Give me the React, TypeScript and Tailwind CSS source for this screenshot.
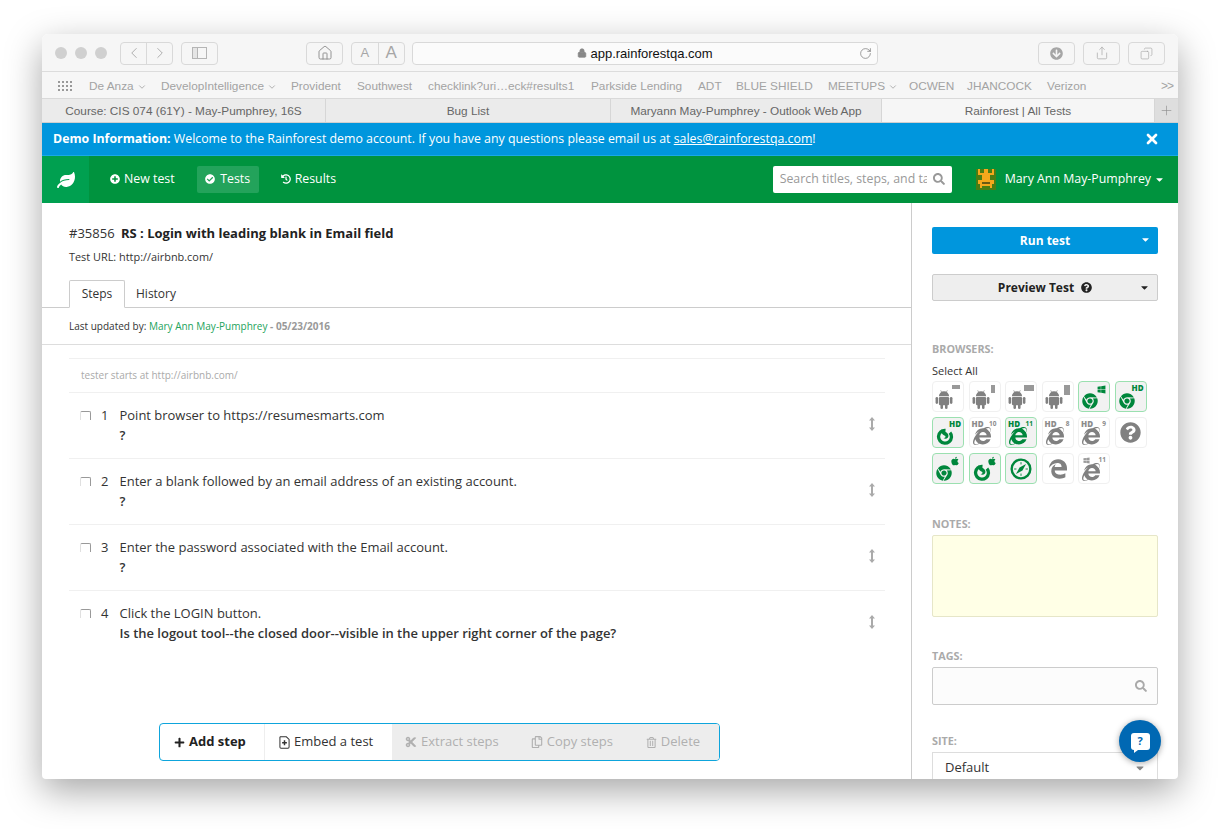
import { ChevronDown, ChevronLeft, ChevronRight, RotateCw, Plus, X, Share, Copy, Lock, House } from "lucide-react";
import { IconType } from "react-icons";
import {
  FaChrome, FaInternetExplorer, FaQuestionCircle, FaWindows, FaApple,
  FaLeaf, FaPlusCircle, FaCheckCircle, FaHistory, FaSearch, FaCaretDown, FaPlus, FaCut, FaRegCopy, FaRegTrashAlt,
  FaArrowCircleDown,
} from "react-icons/fa";
import { FaEdgeLegacy } from "react-icons/fa6";

const ui = "font-['Open_Sans',sans-serif]";

// bookmarks bar
const bookmarks = [
  { label: "De Anza", menu: true, w: "w-[72px]" },
  { label: "DevelopIntelligence", menu: true, w: "w-[130px]" },
  { label: "Provident", w: "w-[66px]" },
  { label: "Southwest", w: "w-[71px]" },
  { label: "checklink?uri…eck#results1", w: "w-[163px]" },
  { label: "Parkside Lending", w: "w-[107px]" },
  { label: "ADT", w: "w-[38px]" },
  { label: "BLUE SHIELD", w: "w-[92px]" },
  { label: "MEETUPS", menu: true, w: "w-[81px]" },
  { label: "OCWEN", w: "w-[58px]" },
  { label: "JHANCOCK", w: "w-[80px]" },
  { label: "Verizon", w: "w-[114px]" },
];

const tabs = [
  { label: "Course: CIS 074 (61Y) - May-Pumphrey, 16S", w: "w-[284px]" },
  { label: "Bug List", w: "w-[285px]" },
  { label: "Maryann May-Pumphrey - Outlook Web App", w: "w-[271px]" },
  { label: "Rainforest | All Tests", w: "w-[273px]", active: true },
];

const steps = [
  { n: 1, text: "Point browser to https://resumesmarts.com", q: "?" },
  { n: 2, text: "Enter a blank followed by an email address of an existing account.", q: "?" },
  { n: 3, text: "Enter the password associated with the Email account.", q: "?" },
  { n: 4, text: "Click the LOGIN button.", q: "Is the logout tool--the closed door--visible in the upper right corner of the page?" },
];

// the older android robot, the icon sets only carry the head
const AndroidIcon: IconType = ({ className }) => (
  <svg viewBox="0 0 18 18" fill="currentColor" className={className}>
    <path d="M4.4 6.6a4.6 4.6 0 0 1 9.2 0Z" />
    <path d="M6 1.2 7 3M12 1.2 11 3" stroke="currentColor" strokeWidth="0.6" />
    <rect x="4.4" y="7.2" width="9.2" height="7.4" rx="1" />
    <rect x="1.4" y="7.2" width="2.3" height="6.2" rx="1.15" />
    <rect x="14.3" y="7.2" width="2.3" height="6.2" rx="1.15" />
    <rect x="5.8" y="13" width="2.3" height="5" rx="1.15" />
    <rect x="9.9" y="13" width="2.3" height="5" rx="1.15" />
  </svg>
);

const CompassIcon: IconType = ({ className }) => (
  <svg viewBox="0 0 24 24" className={className} fill="none" stroke="currentColor">
    <circle cx="12" cy="12" r="10.2" strokeWidth="2.6" />
    <path d="M12 4.5V7M12 17v2.5M4.5 12H7M17 12h2.5" strokeWidth="1" />
    <path d="M17.5 6.5 13.6 13.6 6.5 17.5 10.4 10.4Z" fill="currentColor" stroke="none" />
  </svg>
);

// old firefox mark: open ring with the fox tail curling in
const FoxIcon: IconType = ({ className }) => (
  <svg viewBox="0 0 24 24" className={className} fill="none" stroke="currentColor">
    <circle cx="12" cy="13" r="8.6" strokeWidth="4.4" strokeDasharray="46 8" transform="rotate(-40 12 13)" />
    <path d="M7.5 2.5C10 7 15 5.5 16.5 10.5 17.5 15 12.5 17 10 14.5 12.5 15 13.5 12.5 12 11.5 9.5 10.5 6.5 9 7.5 2.5Z" fill="currentColor" stroke="none" />
  </svg>
);

// browser grid
type Browser = {
  Icon: IconType;
  size: string;
  on?: boolean;
  hd?: boolean;
  num?: string;
  win?: boolean;
  apple?: boolean;
  box?: string;
  big?: boolean;
};

const chromeSize = "w-[16px] h-[16px]";
const foxSize = "w-[18px] h-[18px]";
const ieSize = "w-[18px] h-[18px]";
const droidSize = "w-[20px] h-[20px] -ml-[2px]";

const browsers: Browser[] = [
  { Icon: AndroidIcon, size: droidSize, box: "right-[3px] w-2 h-[4px]" },
  { Icon: AndroidIcon, size: droidSize, box: "right-[5px] w-[4px] h-2" },
  { Icon: AndroidIcon, size: droidSize, box: "right-[2px] w-[10px] h-[6px]" },
  { Icon: AndroidIcon, size: droidSize, box: "right-[3px] w-[6px] h-[10px]" },
  { Icon: FaChrome, size: chromeSize, on: true, win: true },
  { Icon: FaChrome, size: chromeSize, on: true, hd: true },
  { Icon: FoxIcon, size: foxSize, on: true, hd: true },
  { Icon: FaInternetExplorer, size: ieSize, hd: true, num: "10" },
  { Icon: FaInternetExplorer, size: ieSize, on: true, hd: true, num: "11" },
  { Icon: FaInternetExplorer, size: ieSize, hd: true, num: "8" },
  { Icon: FaInternetExplorer, size: ieSize, hd: true, num: "9" },
  { Icon: FaQuestionCircle, size: "w-[21px] h-[21px]", big: true },
  { Icon: FaChrome, size: chromeSize, on: true, apple: true },
  { Icon: FoxIcon, size: foxSize, on: true, apple: true },
  { Icon: CompassIcon, size: "w-[22px] h-[22px]", on: true, big: true },
  { Icon: FaEdgeLegacy, size: "w-[20px] h-[20px]", big: true },
  { Icon: FaInternetExplorer, size: ieSize, num: "11", win: true },
];

const BrowserButton = ({ b }: { b: Browser }) => {
  const tone = b.on ? "text-[#00873c]" : "text-[#808080]";
  const small = b.on ? "text-[#00873c]" : "text-[#8c8c8c]";
  return (
    <div className={`relative w-8 h-[31px] rounded-[4px] border ${b.on ? "border-[#9be0b0] bg-[#f2f2f2]" : "border-[#f0f0f0] bg-white"} ${tone}`}>
      {b.big ? (
        <div className="absolute inset-0 flex items-center justify-center"><b.Icon className={b.size} /></div>
      ) : (
        <b.Icon className={`absolute left-[3px] bottom-[2px] ${b.size}`} />
      )}
      {b.box && <span className={`absolute top-[3px] bg-[#999] ${b.box}`} />}
      {b.hd && (
        <span className={`absolute ${b.num ? "left-[2px]" : "right-[2px]"} top-[2px] text-[8px] leading-[8px] font-extrabold ${ui} ${small}`}>
          HD
        </span>
      )}
      {b.num && (
        <span className={`absolute right-[3px] top-[2px] text-[6.5px] leading-[8px] font-bold ${ui} ${small}`}>{b.num}</span>
      )}
      {b.win && (
        <FaWindows className={`absolute ${b.num ? "left-[4px] text-[#999] w-[7px] h-[7px]" : "right-[3px] w-[9px] h-[9px]"} top-[3px]`} />
      )}
      {b.apple && <FaApple className="absolute right-[3px] top-[2px] w-[10px] h-[10px]" />}
    </div>
  );
};

// pixel art avatar
const Avatar = () => (
  <svg width="20" height="21" viewBox="0 0 10 11" shapeRendering="crispEdges" className="shrink-0">
    <rect x="0" y="0" width="10" height="11" fill="#4a7d14" />
    <rect x="1" y="0" width="1" height="3" fill="#f5a81c" />
    <rect x="4" y="0" width="2" height="2" fill="#f5a81c" />
    <rect x="8" y="0" width="1" height="3" fill="#f5a81c" />
    <rect x="2" y="2" width="6" height="1" fill="#f5a81c" />
    <rect x="3" y="3" width="4" height="3" fill="#f5a81c" />
    <rect x="1" y="6" width="8" height="2" fill="#f5a81c" />
    <rect x="3" y="7" width="4" height="1" fill="#6b5a14" />
    <rect x="2" y="8" width="6" height="1" fill="#f5a81c" />
    <rect x="2" y="9" width="1" height="1" fill="#f5a81c" />
    <rect x="7" y="9" width="1" height="1" fill="#f5a81c" />
  </svg>
);

const EmbedIcon = () => (
  <svg viewBox="0 0 12 14" width="11" height="13" fill="none" stroke="currentColor" className="shrink-0">
    <path d="M1.5.8H8L11 3.6V12a1.2 1.2 0 0 1-1.2 1.2H2.2A1.2 1.2 0 0 1 1 12V1.3Z" strokeWidth="1.1" />
    <path d="M6 4.5V10M3.4 7.2H8.6" strokeWidth="1.6" />
  </svg>
);

const ToolButton = ({ children, className }: { children: React.ReactNode; className?: string }) => (
  <div className={`h-[23px] shrink-0 rounded-[4px] border border-[#d9d9d9] flex items-center justify-center text-[#a6a6a6] ${className}`}>
    {children}
  </div>
);

// Safari toolbar + bookmarks + tabs
const BrowserChrome = () => (
  <div className="font-['Liberation_Sans',sans-serif]">
    <div className="h-[38px] pt-[1px] bg-[#f6f6f6] border-b border-[#dcdcdc] flex items-center pl-[13px]">
      <div className="flex gap-2 mr-[13px] shrink-0">
        <span className="w-3 h-3 rounded-full bg-[#d0d0d0]" />
        <span className="w-3 h-3 rounded-full bg-[#d0d0d0]" />
        <span className="w-3 h-3 rounded-full bg-[#d0d0d0]" />
      </div>
      <div className="flex shrink-0 h-[23px] w-[53px] rounded-[4px] border border-[#d9d9d9] text-[#a6a6a6] mr-2">
        <div className="flex-1 flex items-center justify-center border-r border-[#d9d9d9]"><ChevronLeft size={18} strokeWidth={1.2} /></div>
        <div className="flex-1 flex items-center justify-center"><ChevronRight size={18} strokeWidth={1.2} /></div>
      </div>
      <ToolButton className="w-[37px] mr-[88px]">
        <span className="w-[15px] h-[12px] border border-[#b5b5b5] flex"><span className="w-[5px] border-r border-[#b5b5b5] bg-[#e5e5e5]" /></span>
      </ToolButton>
      <ToolButton className="w-[37px] mr-2">
        <House size={16} strokeWidth={1.4} className="text-[#8c8c8c]" />
      </ToolButton>
      <div className="flex shrink-0 h-[23px] w-[54px] rounded-[4px] border border-[#d9d9d9] text-[#a6a6a6] mr-[7px]">
        <div className="flex-1 flex items-center justify-center border-r border-[#d9d9d9] text-[13px]">A</div>
        <div className="flex-1 flex items-center justify-center text-[17px]">A</div>
      </div>
      <div className="relative shrink-0 h-[23px] w-[466px] rounded-[4px] border border-[#d9d9d9] bg-[#fbfbfb] flex items-center justify-center text-[13px] text-[#111] mr-[160px]">
        <Lock size={10} fill="#888" stroke="#888" className="mr-[3px]" />
        <span className="pt-[1px]">app.rainforestqa.com</span>
        <RotateCw size={13} strokeWidth={1.3} className="absolute right-[5px] top-[4px] text-[#777]" />
      </div>
      <ToolButton className="w-[37px] mr-[8px]"><FaArrowCircleDown size={13} className="text-[#a6a6a6]" /></ToolButton>
      <ToolButton className="w-[37px] mr-[8px]"><Share size={14} strokeWidth={1.2} /></ToolButton>
      <ToolButton className="w-[37px]"><Copy size={13} strokeWidth={1.2} className="-scale-x-100" /></ToolButton>
    </div>
    <div className="h-[27px] pt-[2px] bg-[#f6f6f6] border-b border-[#d9d9d9] flex items-center pl-[16px] text-[11.8px] text-[#a3a3a3]">
      <div className="grid grid-cols-4 gap-[2px] w-[14px] mr-[17px] shrink-0">
        {Array.from({ length: 12 }).map((_, i) => (
          <span key={i} className="w-[2px] h-[2px] bg-[#999]" />
        ))}
      </div>
      {bookmarks.map((b) => (
        <div key={b.label} className={`pt-[1px] flex items-center whitespace-nowrap shrink-0 ${b.w}`}>
          {b.label}
          {b.menu && <ChevronDown size={10} strokeWidth={2} className="ml-[3px]" />}
        </div>
      ))}
      <span className="text-[12px] tracking-[-1px]">&gt;&gt;</span>
    </div>
    <div className="h-[24px] bg-[#ebebeb] border-b border-[#cfcfcf] flex text-[11.8px] text-[#666]">
      {tabs.map((t) => (
        <div
          key={t.label}
          className={`${t.w} pt-[2px] flex items-center justify-center border-r border-[#d6d6d6] ${t.active ? "bg-[#f6f6f6]" : ""}`}
        >
          {t.label}
        </div>
      ))}
      <div className="flex-1 bg-[#dedede] flex items-center justify-center text-[#8a8a8a]"><Plus size={15} strokeWidth={1} /></div>
    </div>
  </div>
);

// Rainforest header
const AppHeader = () => (
  <div className={ui}>
    <div className="h-[33px] bg-[#0096dd] border-b border-[#18a8e8] flex items-center justify-between pl-[11px] pr-[18px] text-[12.35px] text-white">
      <div>
        <span className="font-bold">Demo Information:</span> Welcome to the Rainforest demo account. If you have any questions please email us at{" "}
        <span className="underline">sales@rainforestqa.com</span>!
      </div>
      <X size={16} strokeWidth={4} />
    </div>
    <div className="h-[47px] bg-[#00933e] flex items-center text-[12.35px] text-white">
      <div className="w-[47px] h-full bg-[#00a050] flex items-center justify-center">
        <FaLeaf size={18} />
      </div>
      <div className="flex items-center gap-[4px] ml-[21px] -mt-[1px]"><FaPlusCircle size={10} /> New test</div>
      <div className="flex items-center justify-center gap-[5px] ml-[22px] w-[62px] h-[27px] -mt-[1px] rounded-[2px] bg-[#23a35b]"><FaCheckCircle size={10} /> Tests</div>
      <div className="flex items-center gap-[4px] ml-[22px] -mt-[1px]"><FaHistory size={10} /> Results</div>
      <div className="ml-auto w-[179px] h-[27px] -mt-[1px] rounded-[2px] bg-white flex items-center pl-[7px] pr-[7px] text-[#999]">
        <span className="w-[147px] overflow-hidden whitespace-nowrap">Search titles, steps, and tags</span>
        <FaSearch size={12} className="ml-auto text-[#999]" />
      </div>
      <div className="ml-[24px] mr-[13px] flex items-center -mt-[1px]">
        <Avatar />
        <span className="ml-[9px]">Mary Ann May-Pumphrey</span>
        <FaCaretDown size={11} className="ml-[3px]" />
      </div>
    </div>
  </div>
);

const StepRow = ({ step }: { step: (typeof steps)[number] }) => (
  <div className="relative h-[66px] border-b border-[#f0f0f0] last:border-b-0 pt-[12px] pl-[32px] text-[12.97px] leading-[20px] text-[#333]">
    <span className="absolute left-[11px] top-[18px] w-[11px] h-[9px] rounded-t-[2px] border-t border-r border-l border-t-[#999] border-r-[#999] border-l-[#e0e0e0]" />
    <div className="flex">
      <span className="w-[18.5px]">{step.n}</span>
      <div>
        <div>{step.text}</div>
        <div className="font-semibold">{step.q}</div>
      </div>
    </div>
    <svg viewBox="0 0 8 14" className="absolute right-[9px] top-[24px] w-2 h-[14px] text-[#aaa]" fill="currentColor">
      <path d="M4 0 7 3.5H5V10.5H7L4 14 1 10.5H3V3.5H1Z" />
    </svg>
  </div>
);

const Label = ({ children }: { children: React.ReactNode }) => (
  <div className="text-[10.8px] leading-[14px] font-bold text-[#aaa]">{children}</div>
);

export default function App() {
  return (
    <div className={`w-[1220px] h-[829px] bg-white overflow-hidden pt-[34px] pl-[42px] ${ui}`}>
      <div className="relative w-[1136px] h-[745px] rounded-t-[6px] rounded-b-[4px] bg-white shadow-[0_12px_36px_rgba(0,0,0,0.35)] flex flex-col overflow-hidden">
        <BrowserChrome />
        <AppHeader />

        <div className="flex-1 min-h-0 flex">
          {/* test details */}
          <div className="relative w-[870px] border-r border-[#ccc] pt-[4px]">
            <div className="px-[27px] pt-[17px]">
              <div className="text-[13px] leading-[18px] text-[#333]">
                #35856 <span className="font-bold ml-[3px] text-[#222]">RS : Login with leading blank in Email field</span>
              </div>
              <div className="text-[10.9px] leading-[14px] mt-[8px] text-[#333]">Test URL: http://airbnb.com/</div>
            </div>
            <div className="mt-[16px] h-[28px] border-b border-[#ccc] pl-[27px] flex text-[12px] text-[#333]">
              <div className="h-[28px] w-[56px] border border-[#ccc] border-b-white rounded-t-[2px] bg-white flex items-center justify-center">Steps</div>
              <div className="ml-[11px] flex items-center">History</div>
            </div>
            <div className="h-[37px] border-b border-[#ddd] pl-[27px] flex items-center text-[10px] text-[#333]">
              Last updated by:&nbsp;<span className="text-[#23a35b]">Mary Ann May-Pumphrey</span>&nbsp;<span className="font-bold text-[#999]">- 05/23/2016</span>
            </div>
            <div className="ml-[27px] mr-[26px] mt-[13px] border-t border-[#f0f0f0]">
              <div className="h-[34px] pl-[12px] flex items-center border-b border-[#f0f0f0] text-[10px] text-[#aaa]">tester starts at http://airbnb.com/</div>
              {steps.map((s) => <StepRow key={s.n} step={s} />)}
            </div>

            {/* step actions, floats above the list */}
            <div className="absolute left-[117px] bottom-[18px] w-[561px] h-[38px] rounded-[4px] border border-[#0ea5dc] bg-white flex items-stretch overflow-hidden text-[13px]">
              <div className="w-[105px] border-r border-[#eee] flex items-center pl-[14px] gap-[4px] font-bold text-[#222]"><FaPlus size={11} /> Add step</div>
              <div className="w-[127px] flex items-center pl-[14px] gap-[4px] text-[#333]"><EmbedIcon /> Embed a test</div>
              <div className="flex-1 bg-[#ededed] text-[#b0b0b0] flex items-center pl-[13px]">
                <FaCut size={12} className="mr-[4px]" />Extract steps
                <FaRegCopy size={12} className="ml-[32px] mr-[4px]" />Copy steps
                <FaRegTrashAlt size={11} className="ml-[33px] mr-[4px]" />Delete
              </div>
            </div>
          </div>

          {/* sidebar */}
          <div className="flex-1 min-w-0 overflow-hidden px-[20px] pt-[24px]">
            <div className="relative h-[27px] rounded-[2px] bg-[#0096dd] flex items-center justify-center text-[12px] font-bold text-white">
              Run test
              <FaCaretDown size={11} className="absolute right-[7px] top-[7px]" />
            </div>
            <div className="relative mt-[20px] h-[27px] rounded-[2px] border border-[#ccc] bg-[#eee] flex items-center justify-center gap-[7px] text-[12px] font-bold text-[#222]">
              Preview Test <FaQuestionCircle size={11} />
              <FaCaretDown size={11} className="absolute right-[7px] top-[7px]" />
            </div>

            <div className="mt-[41px]"><Label>BROWSERS:</Label></div>
            <div className="text-[11px] leading-[14px] mt-[8px] text-[#333]">Select All</div>
            <div className="mt-[3px] grid grid-cols-[repeat(6,32px)] gap-x-[4.5px] gap-y-[5px]">
              {browsers.map((b, i) => <BrowserButton key={i} b={b} />)}
            </div>

            <div className="mt-[33px]"><Label>NOTES:</Label></div>
            <div className="mt-[4px] h-[82px] rounded-[2px] border border-[#e6e6c8] bg-[#ffffe6]" />

            <div className="mt-[32px]"><Label>TAGS:</Label></div>
            <div className="mt-[4px] h-[38px] rounded-[2px] border border-[#ccc] bg-[#fcfcfc] flex items-center justify-end pr-[10px] text-[#aaa]">
              <FaSearch size={12} />
            </div>

            <div className="mt-[29px]"><Label>SITE:</Label></div>
            <div className="relative mt-[4px] h-[38px] border border-[#ddd] pl-[12px] pt-[5px] text-[13px] text-[#333]">
              Default
              <FaCaretDown size={12} className="absolute right-[11px] top-[9px] text-[#888]" />
            </div>
          </div>
        </div>

        {/* help bubble */}
        <div className="absolute left-[1077px] top-[686px] w-[42px] h-[42px] rounded-full bg-[#0068b3] shadow-[0_1px_6px_rgba(0,0,0,0.35)] flex items-center justify-center">
          <div className="relative w-[19px] h-[17px] rounded-[3px] bg-white flex items-center justify-center text-[11px] font-bold text-[#0068b3]">
            ?
            <span className="absolute left-[3px] -bottom-[3px] w-0 h-0 border-t-[3px] border-r-[4px] border-t-white border-r-transparent" />
          </div>
        </div>
      </div>
    </div>
  );
}
